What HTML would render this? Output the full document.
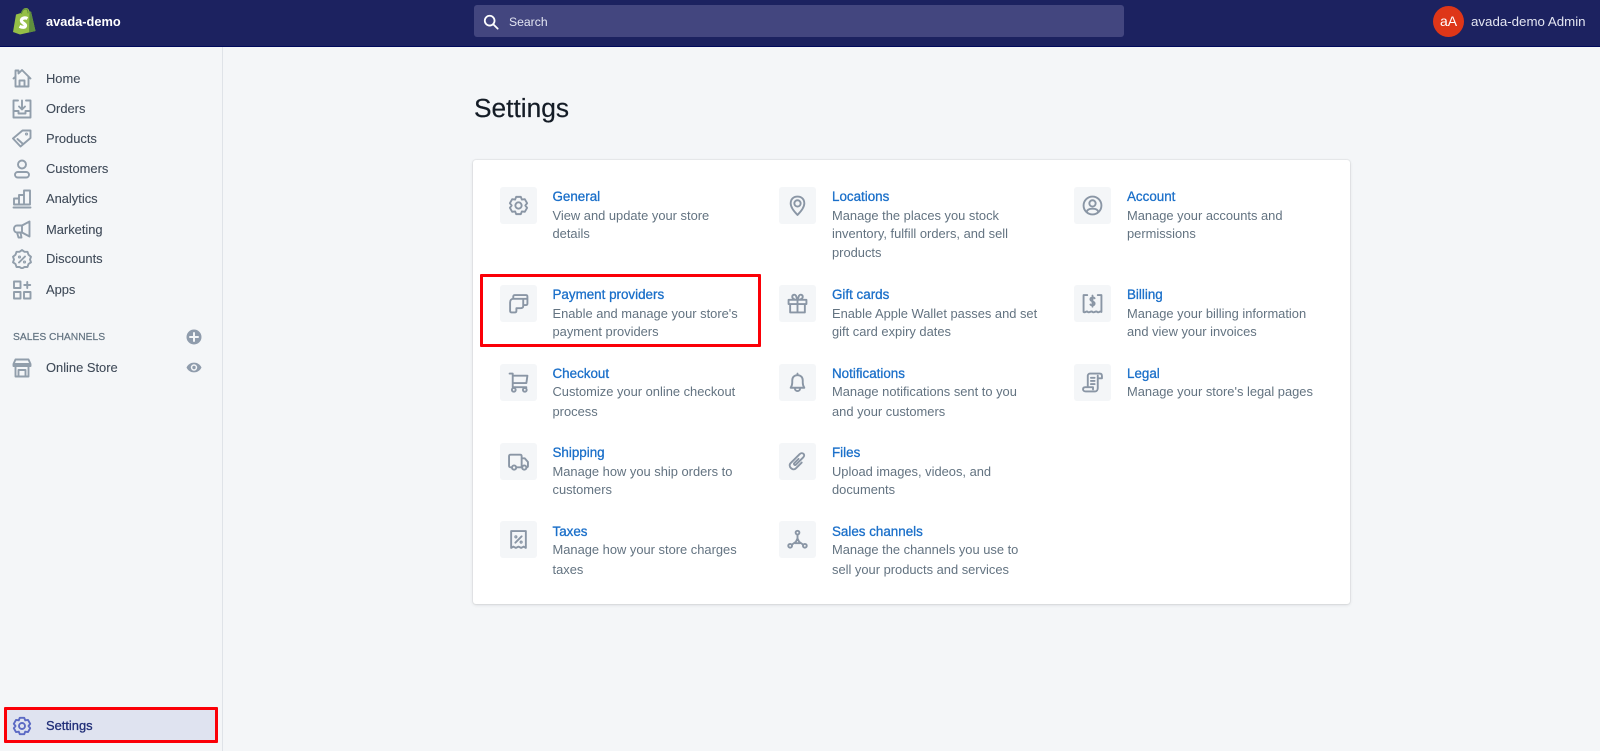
<!DOCTYPE html>
<html><head><meta charset="utf-8"><title>Settings</title>
<style>
html,body{margin:0;padding:0;width:1600px;height:751px;overflow:hidden;background:#f4f6f8;font-family:"Liberation Sans",sans-serif}
#wrap{position:absolute;left:0;top:0;width:1600px;height:751px;overflow:hidden;filter:blur(.3px)}
#top{position:absolute;left:0;top:0;width:1600px;height:46px;background:#1c2260;border-bottom:1px solid #000a5c}
#search{position:absolute;left:474px;top:5px;width:650px;height:32px;background:#43467f;border-radius:3px}
#side{position:absolute;left:0;top:47px;width:222px;height:704px;border-right:1px solid #dfe3e8;background:#f4f6f8}
.t{position:absolute;white-space:nowrap;line-height:20px;font-size:12.9px;color:#454f5b}
.n{left:46px;color:#3f4a58;-webkit-text-stroke:.1px #3f4a58}
.h{font-size:13.4px;color:#1a6fc9;-webkit-text-stroke:.3px #1a6fc9}
.d{color:#637381;font-size:12.9px}
.b{position:absolute;width:37px;height:37px;background:#f4f6f8;border-radius:3px}
.b svg{position:absolute;left:8px;top:8px;width:21px;height:21px}
svg{fill:none;stroke:#8a96a5;stroke-width:1.8;stroke-linejoin:round;stroke-linecap:round}
.i{position:absolute;left:12px;width:20px;height:20px;stroke:#919eab;stroke-width:1.9}
.c1{left:552.5px}.c2{left:832px}.c3{left:1127px}
#card{position:absolute;left:473px;top:160px;width:877px;height:444px;background:#fff;border-radius:3px;box-shadow:0 0 0 1px rgba(63,63,68,.05),0 1px 3px rgba(63,63,68,.15)}
.red{position:absolute;border:3.5px solid #fb0007;box-sizing:border-box;border-radius:1px}
</style></head><body>
<div id="wrap">
<div id="top"></div>
<svg style="position:absolute;left:12px;top:7px;width:24px;height:28px;stroke:none" viewBox="0 0 24 28">
<path d="M1 25 L4 7.500 L9 6 C10 2.500 12 1 14 1 C16 1 17 2.500 17.500 4.500 L19 4.500 L23.500 24 L8 27.500Z" style="fill:#95bf47;stroke:none"/>
<path d="M17.500 4.500 L19 4.500 L23.500 24 L17 25.500Z" style="fill:#5e8e3e;stroke:none"/>
<path d="M9.500 6.500C10 3.500 12 1.800 14 2 C15.500 2.200 16 4 16 6" style="stroke:#5e8e3e;stroke-width:1;fill:none"/>
<path d="M15.500 11.500 C12.500 10 9 11.500 9.500 14 C10 16.200 13.800 16.500 13.500 18.800 C13.200 20.500 10.500 20.800 7.500 19.300" style="stroke:#fff;stroke-width:3.200;fill:none;stroke-linecap:butt"/>
</svg>
<div class="t" style="left:46px;top:12px;color:#fff;font-weight:bold;font-size:12.8px">avada-demo</div>
<div id="search"></div>
<svg style="position:absolute;left:483px;top:14px;width:16px;height:16px;stroke:#fff;stroke-width:2" viewBox="0 0 18 18"><circle cx="7.500" cy="7.500" r="5.500"/><path d="M11.500 11.500L16.500 16.500"/></svg>
<div class="t" style="left:509px;top:12px;color:#e3e5f2;font-size:12.2px">Search</div>
<div style="position:absolute;left:1433px;top:6px;width:31px;height:31px;border-radius:50%;background:#de3618"></div>
<div class="t" style="left:1440px;top:11px;color:#fff;font-size:14px">aA</div>
<div class="t" style="left:1471px;top:12px;color:#e3e5f2;font-size:13.3px">avada-demo Admin</div>

<div id="side"></div>
<svg class="i" style="top:68px" viewBox="0 0 20 20"><path d="M1.500 10.500L3.500 8.500V2.500H6.500V5.500L10 2L18.500 10.500M3.500 8.500V18.500H16.500V8.500M7.500 18.500V12.500H12.500V18.500"/></svg>
<svg class="i" style="top:99px" viewBox="0 0 20 20"><path d="M6 1.500H1.500V18.500H18.500V1.500H14M1.500 12H6.500V14.500H13.500V12H18.500M10 1.500V10M7 7.500L10 10.500 13 7.500"/></svg>
<svg class="i" style="top:128px" viewBox="0 0 20 20"><path d="M1 10.500L10.500 2.500H18.500V10L8.500 18.500ZM5.500 11L11 16"/><circle cx="14.500" cy="6" r=".6"/></svg>
<svg class="i" style="top:159px" viewBox="0 0 20 20"><circle cx="10" cy="5.500" r="4"/><rect x="3" y="13" width="14" height="5.500" rx="2.750"/></svg>
<svg class="i" style="top:189px" viewBox="0 0 20 20"><path d="M1.500 18.500H18.500M2 15.500V9.500H7V15.500M7 15.500V6H12V15.500M12 15.500V1.500H18V15.500M2 15.500H18"/></svg>
<svg class="i" style="top:220px" viewBox="0 0 20 20"><path d="M17.500 1.500V16.500L10 12.500H5C1 12.500 1 5.500 5 5.500H10ZM10 5.500V12.500M5 12.500L6.500 17.500H9.500L8.500 12.500"/></svg>
<svg class="i" style="top:249px" viewBox="0 0 20 20"><path d="M10 1L12.500 2.800 15.500 2.800 16.500 5.700 19 7.700 18 10.500 19 13.300 16.500 15 15.500 18 12.500 18 10 19.500 7.500 18 4.500 18 3.500 15 1 13.300 2 10.500 1 7.700 3.500 5.700 4.500 2.800 7.500 2.800ZM7 13.500L13 7.500"/><circle cx="7.500" cy="8" r=".6"/><circle cx="12.500" cy="13" r=".6"/></svg>
<svg class="i" style="top:280px" viewBox="0 0 20 20"><path d="M2 1.500H8.500V8H2ZM2 12H8.500V18.500H2ZM12 12H18.500V18.500H12ZM15.250 2V8M12.250 5H18.250"/></svg>
<div class="t" style="left:13px;top:328px;font-size:10.3px;color:#637381;-webkit-text-stroke:.2px #637381">SALES CHANNELS</div>
<svg style="position:absolute;left:186px;top:329px;width:16px;height:16px;stroke:none" viewBox="0 0 16 16"><circle cx="8" cy="8" r="7.500" style="fill:#8f9cac"/><path d="M8 4V12M4 8H12" style="stroke:#f4f6f8;stroke-width:2"/></svg>
<svg class="i" style="top:358px" viewBox="0 0 20 20"><path d="M3.500 1.500H16.500L18.500 6V8H1.500V6ZM1.500 6H18.500M3.500 8.500V18.500H16.500V8.500M6.500 18.500V12H13.500V18.500"/></svg>
<svg style="position:absolute;left:186px;top:361px;width:16px;height:13px;stroke:none" viewBox="0 0 16 12"><path d="M.500 6C3.500 -.5 12.500 -.5 15.500 6C12.500 12.500 3.500 12.500 .500 6Z" style="fill:#8f9cac"/><circle cx="8" cy="6" r="3.200" style="fill:#f4f6f8"/><circle cx="8" cy="6" r="1.700" style="fill:#8f9cac"/></svg>

<div class="t n" style="top:69px">Home</div>
<div class="t n" style="top:99px">Orders</div>
<div class="t n" style="top:129px">Products</div>
<div class="t n" style="top:159px">Customers</div>
<div class="t n" style="top:189px">Analytics</div>
<div class="t n" style="top:220px">Marketing</div>
<div class="t n" style="top:249px">Discounts</div>
<div class="t n" style="top:280px">Apps</div>
<div class="t n" style="top:358px">Online Store</div>

<div style="position:absolute;left:6px;top:709px;width:210px;height:33px;background:#dfe3f0"></div>
<svg class="i" style="top:716px;stroke:#5c6ac4" viewBox="0 0 20 20"><path d="M7.800 1.790L12.200 1.790 13.250 4.370 16.010 3.990 18.210 7.800 16.500 10 18.210 12.200 16.010 16.010 13.250 15.630 12.200 18.210 7.800 18.210 6.750 15.630 3.990 16.010 1.790 12.200 3.500 10 1.790 7.800 3.990 3.990 6.750 4.370Z"/><circle cx="10" cy="10" r="3"/></svg>
<div class="t n" style="top:716px;color:#202e78;-webkit-text-stroke:.3px #202e78">Settings</div>
<div class="red" style="left:4px;top:707px;width:214px;height:36px"></div>

<div class="t" style="left:474px;top:93px;line-height:30px;font-size:26.3px;color:#141c26;-webkit-text-stroke:.2px #141c26">Settings</div>
<div id="card"></div>

<!-- Column 1 -->
<div class="b" style="left:499.500px;top:187px"><svg viewBox="0 0 20 20"><path d="M7.800 1.790L12.200 1.790 13.250 4.370 16.010 3.990 18.210 7.800 16.500 10 18.210 12.200 16.010 16.010 13.250 15.630 12.200 18.210 7.800 18.210 6.750 15.630 3.990 16.010 1.790 12.200 3.500 10 1.790 7.800 3.990 3.990 6.750 4.370Z"/><circle cx="10" cy="10" r="3"/></svg></div>
<div class="t h c1" style="top:187px">General</div>
<div class="t d c1" style="top:206px">View and update your store</div>
<div class="t d c1" style="top:224px">details</div>

<div class="b" style="left:499.500px;top:285px"><svg viewBox="0 0 20 20"><path d="M5 5.500V3.500C5 2.500 5.500 2 6.500 2H17C18 2 18.500 2.500 18.500 3.500V10C18.500 11 18 11.500 17 11.500H14.500M2 9C2 7 3 5.500 5 5.500H14.500V12.500C14.500 14 13 14.500 11.500 14.500H8V17C8 18 7.500 18.500 6.500 18.500H3.500C2.500 18.500 2 18 2 17ZM5 5.500H18.500"/></svg></div>
<div class="t h c1" style="top:285px">Payment providers</div>
<div class="t d c1" style="top:304px">Enable and manage your store's</div>
<div class="t d c1" style="top:322px">payment providers</div>

<div class="b" style="left:499.500px;top:363.500px"><svg viewBox="0 0 20 20"><path d="M1.500 1.500H4.500V14.500H17.500M4.500 3.500H18.500L17.500 10.500H4.500"/><circle cx="5.500" cy="17" r="1.800"/><circle cx="16" cy="17" r="1.800"/></svg></div>
<div class="t h c1" style="top:364px">Checkout</div>
<div class="t d c1" style="top:382px">Customize your online checkout</div>
<div class="t d c1" style="top:402px">process</div>

<div class="b" style="left:499.500px;top:442.500px"><svg viewBox="0 0 20 20"><path d="M3.500 15.500H2.500C1.500 15.500 1 15 1 14V5C1 4 1.500 3.500 2.500 3.500H11.500C12.500 3.500 13 4 13 5V15.500H8M13 7H16L19 10.500V14.500C19 15 18.500 15.500 18 15.500H17.500M13 15.500H13.500"/><circle cx="5.800" cy="15.800" r="2"/><circle cx="15.500" cy="15.800" r="2"/></svg></div>
<div class="t h c1" style="top:443px">Shipping</div>
<div class="t d c1" style="top:462px">Manage how you ship orders to</div>
<div class="t d c1" style="top:480px">customers</div>

<div class="b" style="left:499.500px;top:521px"><svg viewBox="0 0 20 20"><path d="M3 2H17V18L15 16.800 12.500 18 10 16.800 7.500 18 5 16.800 3 18ZM7 13L13 7"/><circle cx="7.500" cy="7.500" r=".6"/><circle cx="12.500" cy="12.500" r=".6"/></svg></div>
<div class="t h c1" style="top:522px">Taxes</div>
<div class="t d c1" style="top:540px">Manage how your store charges</div>
<div class="t d c1" style="top:560px">taxes</div>

<!-- Column 2 -->
<div class="b" style="left:779px;top:187px"><svg viewBox="0 0 20 20"><path d="M10 19C6 15 3.500 11.500 3.500 8C3.500 4 6 1.500 10 1.500C14 1.500 16.500 4 16.500 8C16.500 11.500 14 15 10 19Z"/><circle cx="10" cy="8" r="3"/></svg></div>
<div class="t h c2" style="top:187px">Locations</div>
<div class="t d c2" style="top:206px">Manage the places you stock</div>
<div class="t d c2" style="top:224px">inventory, fulfill orders, and sell</div>
<div class="t d c2" style="top:243px">products</div>

<div class="b" style="left:779px;top:285px"><svg viewBox="0 0 20 20"><path d="M1.500 6.500H18.500V10.500H1.500ZM3 10.500V18.500H17V10.500M10 6.500V18.500M10 6.500C8 6.500 5 6 5 3.500C5 1.500 7.500 1 8.500 2.500L10 6.500L11.500 2.500C12.500 1 15 1.500 15 3.500C15 6 12 6.500 10 6.500Z"/></svg></div>
<div class="t h c2" style="top:285px">Gift cards</div>
<div class="t d c2" style="top:304px">Enable Apple Wallet passes and set</div>
<div class="t d c2" style="top:322px">gift card expiry dates</div>

<div class="b" style="left:779px;top:363.500px"><svg viewBox="0 0 20 20"><path d="M10 1.500V3M3.500 15H16.500C15.500 13.500 15 12.500 15 10V8C15 5 13 3 10 3C7 3 5 5 5 8V10C5 12.500 4.500 13.500 3.500 15ZM7.500 15.500C7.500 19 12.500 19 12.500 15.500"/></svg></div>
<div class="t h c2" style="top:364px">Notifications</div>
<div class="t d c2" style="top:382px">Manage notifications sent to you</div>
<div class="t d c2" style="top:402px">and your customers</div>

<div class="b" style="left:779px;top:442.500px"><svg viewBox="0 0 20 20"><path d="M11 7.500L7 11.500C6 12.500 7.500 14 8.500 13L15.500 6C18 3.500 14.500 .5 12 3L3.500 11.500C.5 14.500 5.500 19.500 8.500 16.500L14 11"/></svg></div>
<div class="t h c2" style="top:443px">Files</div>
<div class="t d c2" style="top:462px">Upload images, videos, and</div>
<div class="t d c2" style="top:480px">documents</div>

<div class="b" style="left:779px;top:521px"><svg viewBox="0 0 20 20"><circle cx="10" cy="3.500" r="1.800"/><circle cx="3" cy="16" r="1.800"/><circle cx="17" cy="16" r="1.800"/><path d="M10 5.300V9M4.500 15L8 12.500M15.500 15L12 12.500M10 9L7.800 13.500H12.200Z"/></svg></div>
<div class="t h c2" style="top:522px">Sales channels</div>
<div class="t d c2" style="top:540px">Manage the channels you use to</div>
<div class="t d c2" style="top:560px">sell your products and services</div>

<!-- Column 3 -->
<div class="b" style="left:1074px;top:187px"><svg viewBox="0 0 20 20"><circle cx="10" cy="10" r="8.500"/><circle cx="10" cy="8" r="3"/><path d="M4.500 16C5 13.500 7 13 10 13C13 13 15 13.500 15.500 16"/></svg></div>
<div class="t h c3" style="top:187px">Account</div>
<div class="t d c3" style="top:206px">Manage your accounts and</div>
<div class="t d c3" style="top:224px">permissions</div>

<div class="b" style="left:1074px;top:285px"><svg viewBox="0 0 20 20"><path d="M5 2H1.500V18C3 19.500 4 16.500 5.500 18C7 19.500 8.500 16.500 10 18C11.500 19.500 13 16.500 14.500 18C16 19.500 17 16.500 18.500 18V2H15M12 5C11 3.800 8 4 8 6C8 8.500 12 7.500 12 10C12 12 9 12.200 8 11M10 2.500V13"/></svg></div>
<div class="t h c3" style="top:285px">Billing</div>
<div class="t d c3" style="top:304px">Manage your billing information</div>
<div class="t d c3" style="top:322px">and view your invoices</div>

<div class="b" style="left:1074px;top:363.500px"><svg viewBox="0 0 20 20"><path d="M5.500 14.500V3.500C5.500 2.500 6.500 1.500 7.500 1.500H17C18.500 1.500 19 2.500 19 4V6H15M15 3.500V15.500C15 17 14 18.500 12.500 18.500H3.500C2 18.500 1 17.500 1 16.500C1 15.500 1.500 14.500 3 14.500H10.500V16.500M8.500 5.500H12M8.500 8.500H12M8.500 11.500H12"/></svg></div>
<div class="t h c3" style="top:364px">Legal</div>
<div class="t d c3" style="top:382px">Manage your store's legal pages</div>

<div class="red" style="left:480px;top:273.500px;width:281px;height:73px"></div>
</div>
</body></html>
